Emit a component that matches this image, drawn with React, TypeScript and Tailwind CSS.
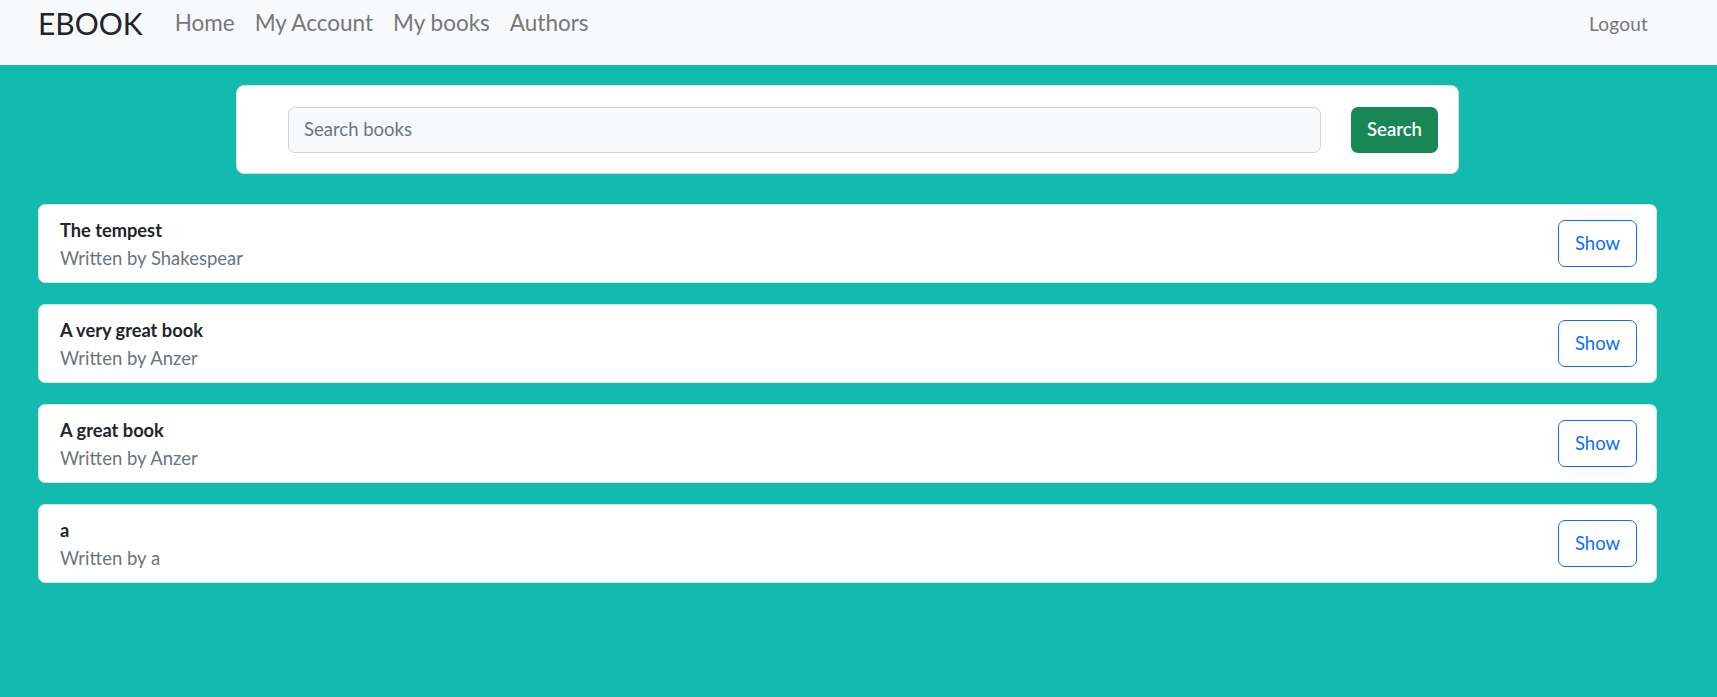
const books = [
  { title: 'The tempest', author: 'Shakespear' },
  { title: 'A very great book', author: 'Anzer' },
  { title: 'A great book', author: 'Anzer' },
  { title: 'a', author: 'a' },
]

const navLinks = ['Home', 'My Account', 'My books', 'Authors']

function Navbar() {
  return (
    <nav className="flex h-[65px] items-start bg-[#f8f9fa]">
      <div className="flex h-[46px] w-full items-center pl-[38px] pr-[69px]">
        <span className="text-[30px] leading-none text-[#212529]">EBOOK</span>
        <ul className="ml-[32px] flex items-center gap-[20px]">
          {navLinks.map((link) => (
            <li key={link} className="text-[22.5px] leading-none text-[#77777a]">
              {link}
            </li>
          ))}
        </ul>
        <span className="ml-auto text-[19px] leading-none tracking-[0.2px] text-[#77777a]">Logout</span>
      </div>
    </nav>
  )
}

function SearchCard() {
  return (
    <div className="ml-[236px] mt-[20px] flex h-[89px] w-[1223px] items-center rounded-[8px] border border-[#dcdcdc] bg-white pl-[51px] pr-[20px]">
      <div className="flex h-[46px] flex-1 items-center rounded-[7px] border border-[#ced4da] bg-[#f8f9fa] px-[15px] text-[18.5px] text-[#6c757d]">
        Search books
      </div>
      <button className="ml-[30px] h-[46px] w-[87px] rounded-[7px] bg-[#198754] text-[18.5px] font-semibold text-white">
        Search
      </button>
    </div>
  )
}

function BookCard({ title, author }: { title: string; author: string }) {
  return (
    <div className="flex h-[79px] items-center justify-between rounded-[7px] border border-[#dedede] bg-white pl-[21px] pr-[19px]">
      <div className="flex flex-col">
        <span className="text-[18.25px] font-bold leading-[24px] text-[#212529]">{title}</span>
        <span className="mt-[4px] text-[18.5px] leading-[24px] text-[#6c757d]">Written by {author}</span>
      </div>
      <button className="h-[47px] w-[79px] rounded-[7px] border border-[#0d6efd] text-[18.5px] text-[#0d6efd]">
        Show
      </button>
    </div>
  )
}

export default function App() {
  return (
    <div className="min-h-[697px] bg-[#12bbad]" style={{ fontFamily: 'Lato, "Noto Sans", sans-serif' }}>
      <Navbar />
      <SearchCard />
      <div className="ml-[38px] mt-[30px] flex w-[1619px] flex-col gap-[21px]">
        {books.map((b) => (
          <BookCard key={b.title} title={b.title} author={b.author} />
        ))}
      </div>
    </div>
  )
}
